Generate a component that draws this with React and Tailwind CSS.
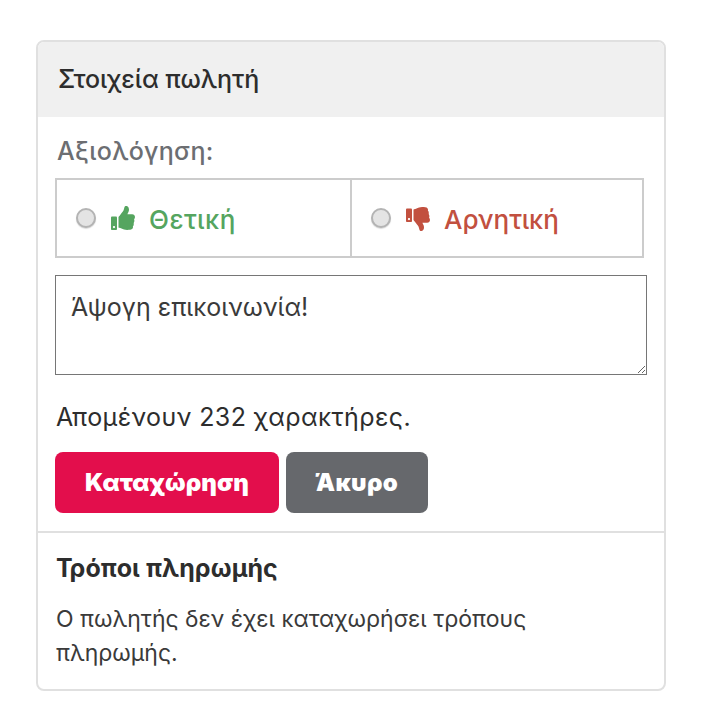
import React from "react";
import { FaThumbsUp, FaThumbsDown } from "react-icons/fa";

const Radio = () => (
  <span className="w-5 h-5 rounded-full border-2 border-[#b4b4b4] bg-[#e4e4e4] shadow-[0_1px_1px_rgba(0,0,0,0.15)] shrink-0"></span>
);

export default function App() {
  return (
    <div className="bg-white h-[707px] pt-10 pl-9 font-['Inter',sans-serif] text-[#2d2d2d]">
      <div className="w-[630px] h-[651px] border-2 border-[#e0e0e0] rounded-lg overflow-hidden">
        {/* Header */}
        <div className="h-[75px] bg-[#f0f0f0] pl-5 flex items-center text-[25px] font-medium tracking-[-0.1px]">
          Στοιχεία πωλητή
        </div>

        <div className="px-[17px] pt-5 h-[416px] border-b-2 border-[#e0e0e0]">
          <div className="text-[25px] leading-7 font-medium tracking-[0.3px] text-[#6c6e72] pl-[2px]">Αξιολόγηση:</div>

          {/* Rating */}
          <div className="mt-[13px] w-[589px] h-20 border-2 border-[#cccccc] flex">
            <label className="w-[295px] border-r-2 border-[#cccccc] flex items-center pl-[19px]">
              <Radio />
              <FaThumbsUp className="ml-[15px] text-[#55a55f] text-[24px]" />
              <span className="ml-[14px] mt-[3px] text-[26px] leading-8 font-medium tracking-[0.5px] text-[#55a55f]">Θετική</span>
            </label>
            <label className="flex-1 flex items-center pl-[19px]">
              <Radio />
              <FaThumbsDown className="ml-[15px] mt-[2px] text-[#c2503f] text-[24px]" />
              <span className="ml-[14px] mt-[3px] text-[26px] leading-8 font-medium text-[#c2503f]">Αρνητική</span>
            </label>
          </div>

          <textarea
            defaultValue="Άψογη επικοινωνία!"
            className="block mt-[17px] w-[592px] h-[100px] border border-[#767676] pl-[15px] pr-4 py-[13px] text-[25px] leading-9 text-[#3a3a3a] outline-none"
          ></textarea>

          <p className="mt-[26px] pl-px text-[25px] leading-8 tracking-[0.4px]">Απομένουν 232 χαρακτήρες.</p>

          <div className="mt-[19px] flex gap-[7px]">
            <button className="w-[224px] h-[61px] rounded-lg bg-[#e30e4c] text-white text-[24px] font-black tracking-[0.1px]">
              Καταχώρηση
            </button>
            <button className="w-[142px] h-[61px] rounded-lg bg-[#66686c] text-white text-[24px] font-black tracking-[0.3px]">
              Άκυρο
            </button>
          </div>
        </div>

        {/* Payment */}
        <div className="px-[18px] pt-[19px]">
          <h3 className="text-[25px] leading-8 font-bold tracking-[0.1px]">Τρόποι πληρωμής</h3>
          <p className="mt-[18px] text-[23px] leading-[34px] w-[520px] text-[#3a3a3a]">
            Ο πωλητής δεν έχει καταχωρήσει τρόπους πληρωμής.
          </p>
        </div>
      </div>
    </div>
  );
}
